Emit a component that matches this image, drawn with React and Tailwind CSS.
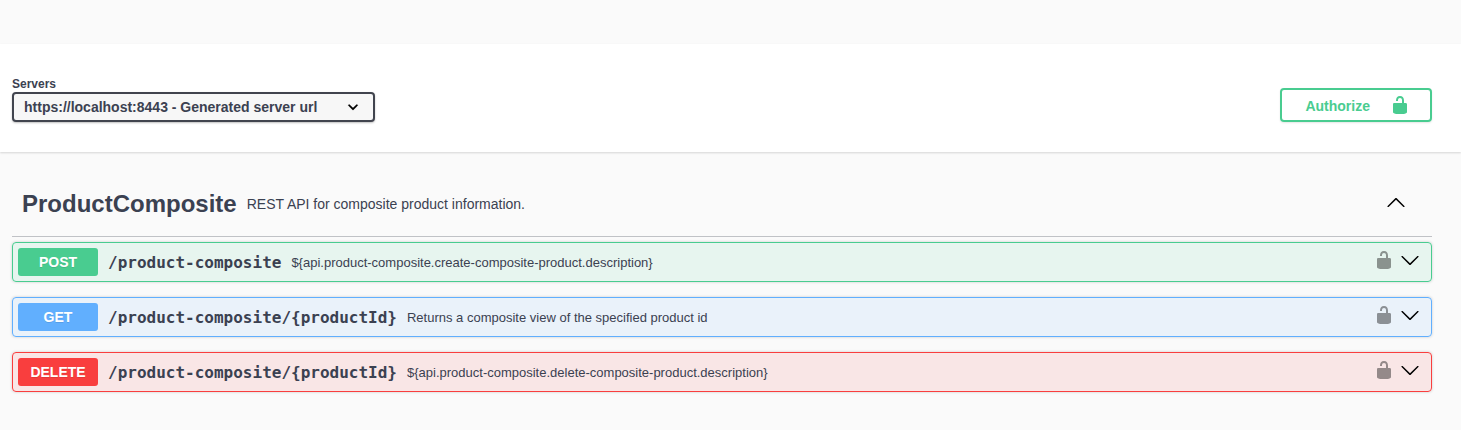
const UNLOCKED =
  "M15.8 8H14V5.6C14 2.703 12.665 1 10 1 7.334 1 6 2.703 6 5.6V6h2v-.801C8 3.754 8.797 3 10 3c1.203 0 2 .754 2 2.199V8H4c-.553 0-1 .646-1 1.199V17c0 .549.428 1.139.951 1.307l1.197.387C5.672 18.861 6.55 19 7.1 19h5.8c.549 0 1.428-.139 1.951-.307l1.196-.387c.524-.167.953-.757.953-1.306V9.199C17 8.646 16.352 8 15.8 8z";
const ARROW_DOWN =
  "M17.418 6.109c.272-.268.709-.268.979 0s.271.701 0 .969l-7.908 7.83c-.27.268-.707.268-.979 0l-7.908-7.83c-.27-.268-.27-.701 0-.969.271-.268.709-.268.979 0L10 13.25l7.418-7.141z";
const ARROW_UP =
  "M17.418 14.908c.272.268.709.268.979 0s.271-.701 0-.969l-7.908-7.83c-.27-.268-.707-.268-.979 0l-7.908 7.83c-.27.268-.27.701 0 .969.271.268.709.268.979 0L10 7.767l7.418 7.141z";
const SELECT_ARROW =
  "M13.418 7.859a.695.695 0 01.978 0 .68.68 0 010 .969l-3.908 3.83a.697.697 0 01-.979 0l-3.908-3.83a.68.68 0 010-.969.695.695 0 01.978 0L10 11l3.418-3.141z";

function Icon({ d, className = "" }) {
  return (
    <svg viewBox="0 0 20 20" fill="currentColor" className={`size-5 shrink-0 ${className}`}>
      <path d={d} />
    </svg>
  );
}

const OPERATIONS = [
  {
    method: "POST",
    path: "/product-composite",
    summary: "${api.product-composite.create-composite-product.description}",
    box: "border-[#49cc90] bg-[#49cc90]/10",
    badge: "bg-[#49cc90]",
  },
  {
    method: "GET",
    path: "/product-composite/{productId}",
    summary: "Returns a composite view of the specified product id",
    box: "border-[#61affe] bg-[#61affe]/10",
    badge: "bg-[#61affe]",
  },
  {
    method: "DELETE",
    path: "/product-composite/{productId}",
    summary: "${api.product-composite.delete-composite-product.description}",
    box: "border-[#f93e3e] bg-[#f93e3e]/10",
    badge: "bg-[#f93e3e]",
  },
];

function Operation({ method, path, summary, box, badge }) {
  return (
    <div
      className={`flex h-10 items-center rounded border pl-[5px] pr-[11px] shadow-[0_0_3px_rgba(0,0,0,0.19)] ${box}`}
    >
      <span
        className={`h-7 w-20 rounded-[3px] text-center text-sm leading-7 font-bold text-white [text-shadow:0_1px_0_rgba(0,0,0,0.1)] ${badge}`}
      >
        {method}
      </span>
      <span className="mt-0.5 ml-2.5 font-['DejaVu_Sans_Mono',monospace] text-base font-bold">{path}</span>
      <span className="mt-0.5 ml-2.5 text-[13px]">{summary}</span>
      <button className="mb-1 ml-auto text-black opacity-40">
        <Icon d={UNLOCKED} />
      </button>
      <button className="mb-1 ml-1.5 text-black">
        <Icon d={ARROW_DOWN} />
      </button>
    </div>
  );
}

export default function App() {
  return (
    <div className="min-h-screen bg-[#fafafa] pt-11 font-['Liberation_Sans',Arial,sans-serif] text-[#3b4151]">
      <header className="flex h-[108px] items-end justify-between bg-white pr-[29px] pb-[30px] pl-3 shadow-[0_1px_2px_rgba(0,0,0,0.15)]">
        <div>
          <div className="text-xs leading-4 font-bold">Servers</div>
          <div className="flex h-[30px] w-[363px] items-center justify-between rounded border-2 border-[#41444e] bg-[#f7f7f7] px-2.5 text-sm font-bold shadow-[0_1px_2px_rgba(0,0,0,0.25)]">
            <span>https://localhost:8443 - Generated server url</span>
            <Icon d={SELECT_ARROW} className="stroke-black stroke-[0.4] text-black" />
          </div>
        </div>
        <button className="flex h-[34px] w-[152px] items-center justify-between rounded border-2 border-[#49cc90] pr-5 pl-[23.4px] text-sm font-bold text-[#49cc90] shadow-[0_1px_2px_rgba(0,0,0,0.1)]">
          <span className="mt-0.5">Authorize</span>
          <Icon d={UNLOCKED} />
        </button>
      </header>
      <main className="pt-5 pr-[29px] pl-3">
        <div className="flex h-[65px] items-center border-b border-[#3b4151]/30 pr-[26px] pl-2.5">
          <h2 className="text-2xl font-bold">ProductComposite</h2>
          <p className="ml-2.5 text-sm">REST API for composite product information.</p>
          <button className="mb-1 ml-auto text-black">
            <Icon d={ARROW_UP} />
          </button>
        </div>
        <div className="flex flex-col gap-[15px] pt-[5px]">
          {OPERATIONS.map((op) => (
            <Operation key={op.method} {...op} />
          ))}
        </div>
      </main>
    </div>
  );
}
